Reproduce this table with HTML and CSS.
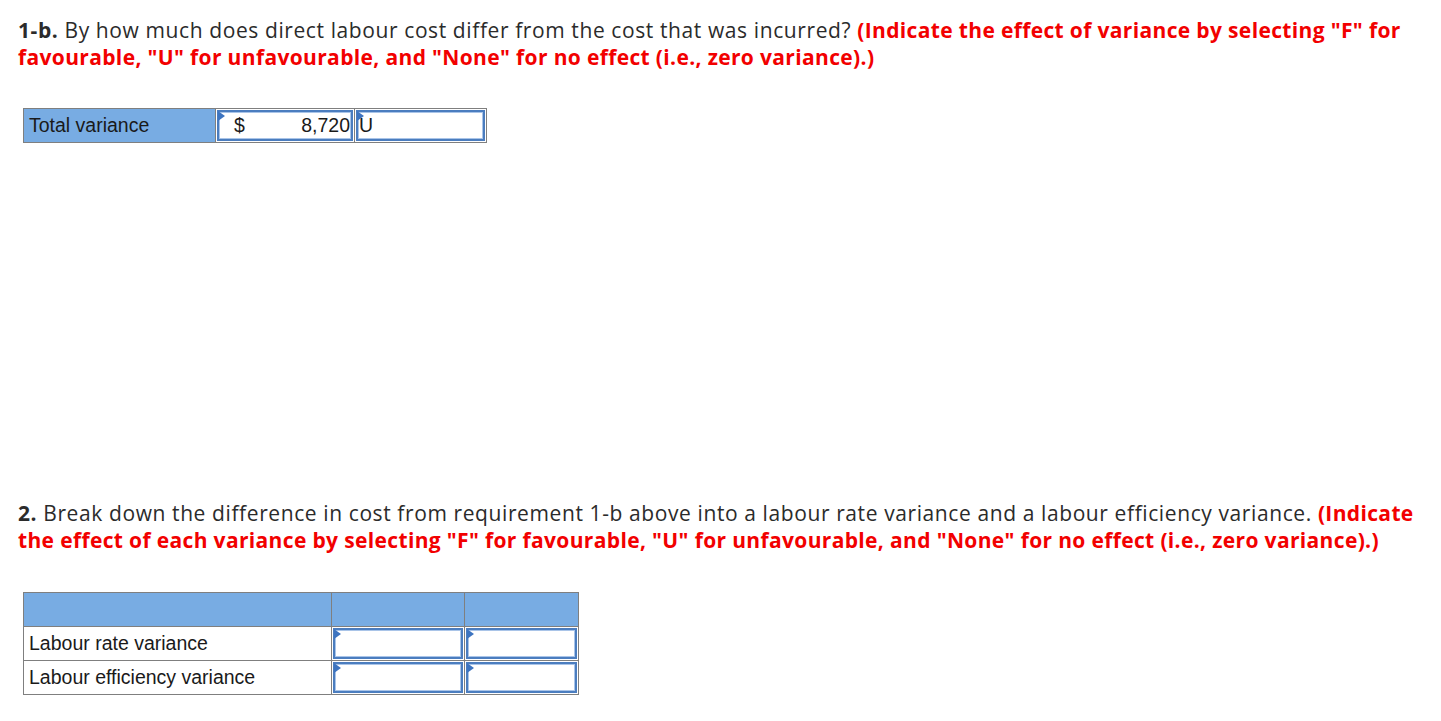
FILE: index.html
```html
<!DOCTYPE html>
<html>
<head>
<meta charset="utf-8">
<link rel="stylesheet" href="styles.css">
</head>
<body>
<div class="page">
  <p class="question"><b>1-b.</b> By how much does direct labour cost differ from the cost that was incurred? <span class="note">(Indicate the effect of variance by selecting "F" for favourable, "U" for unfavourable, and "None" for no effect (i.e., zero variance).)</span></p>

  <table class="grid total">
    <tr>
      <td class="label">Total variance</td>
      <td class="inp amount"><div class="box"><span class="tri"></span><span class="cur">$</span><span class="val">8,720</span></div></td>
      <td class="inp effect"><div class="box"><span class="tri"></span><span class="txt">U</span></div></td>
    </tr>
  </table>

  <p class="question q2"><b>2.</b> Break down the difference in cost from requirement 1-b above into a labour rate variance and a labour efficiency variance. <span class="note">(Indicate the effect of each variance by selecting "F" for favourable, "U" for unfavourable, and "None" for no effect (i.e., zero variance).)</span></p>

  <table class="grid breakdown">
    <tr class="head">
      <td class="c1"></td>
      <td class="c2"></td>
      <td class="c3"></td>
    </tr>
    <tr>
      <td class="label white">Labour rate variance</td>
      <td class="inp"><div class="box"><span class="tri"></span></div></td>
      <td class="inp"><div class="box"><span class="tri"></span></div></td>
    </tr>
    <tr>
      <td class="label white">Labour efficiency variance</td>
      <td class="inp"><div class="box"><span class="tri"></span></div></td>
      <td class="inp"><div class="box"><span class="tri"></span></div></td>
    </tr>
  </table>
</div>
</body>
</html>
```
FILE: styles.css
```css
html, body {
  margin: 0;
  padding: 0;
  background: #fff;
}
.page {
  padding: 17px 18px 0 18px;
}
.question {
  margin: 0;
  font-family: "Open Sans", Lato, sans-serif;
  font-size: 21px;
  letter-spacing: 0.6px;
  line-height: 27px;
  color: #2b2b2b;
  width: 1420px;
}
.question b {
  font-weight: 700;
  color: #2b2b2b;
}
.note {
  color: #f20000;
  font-weight: 700;
  letter-spacing: 0.35px;
}
.grid {
  border-collapse: collapse;
  font-family: "Liberation Sans", Arial, sans-serif;
  font-size: 19.5px;
  color: #1a1a1a;
}
.grid td {
  border: 1px solid #7f7f7f;
  padding: 0;
  height: 33px;
  vertical-align: middle;
}
.total {
  margin: 37px 0 0 5px;
}
.total .label {
  width: 186px;
  background: #78ace3;
  padding-left: 5px;
}
.total .amount { width: 138px; }
.total .effect { width: 131px; }
.label.white {
  background: #fff;
  padding-left: 5px;
}
.inp {
  background: #fff;
}
.box {
  position: relative;
  height: 27px;
  margin: 1px;
  border: 2px solid #4b7dbf;
  box-shadow: inset 0 0 0 1px #a9c4e8;
  display: flex;
  align-items: center;
}
.tri {
  position: absolute;
  left: -1px;
  top: -1px;
  width: 0;
  height: 0;
  border-top: 5px solid transparent;
  border-bottom: 5px solid transparent;
  border-left: 7px solid #3d74c0;
}
.cur {
  margin-left: 15px;
}
.val {
  margin-left: auto;
  margin-right: 1px;
}
.txt {
  margin-left: 1px;
}
.q2 {
  margin-top: 357px;
}
.breakdown {
  margin: 38px 0 0 5px;
}
.breakdown .head td {
  background: #78ace3;
}
.breakdown .c1 { width: 307px; }
.breakdown .c2 { width: 132px; }
.breakdown .c3 { width: 113px; }
```
